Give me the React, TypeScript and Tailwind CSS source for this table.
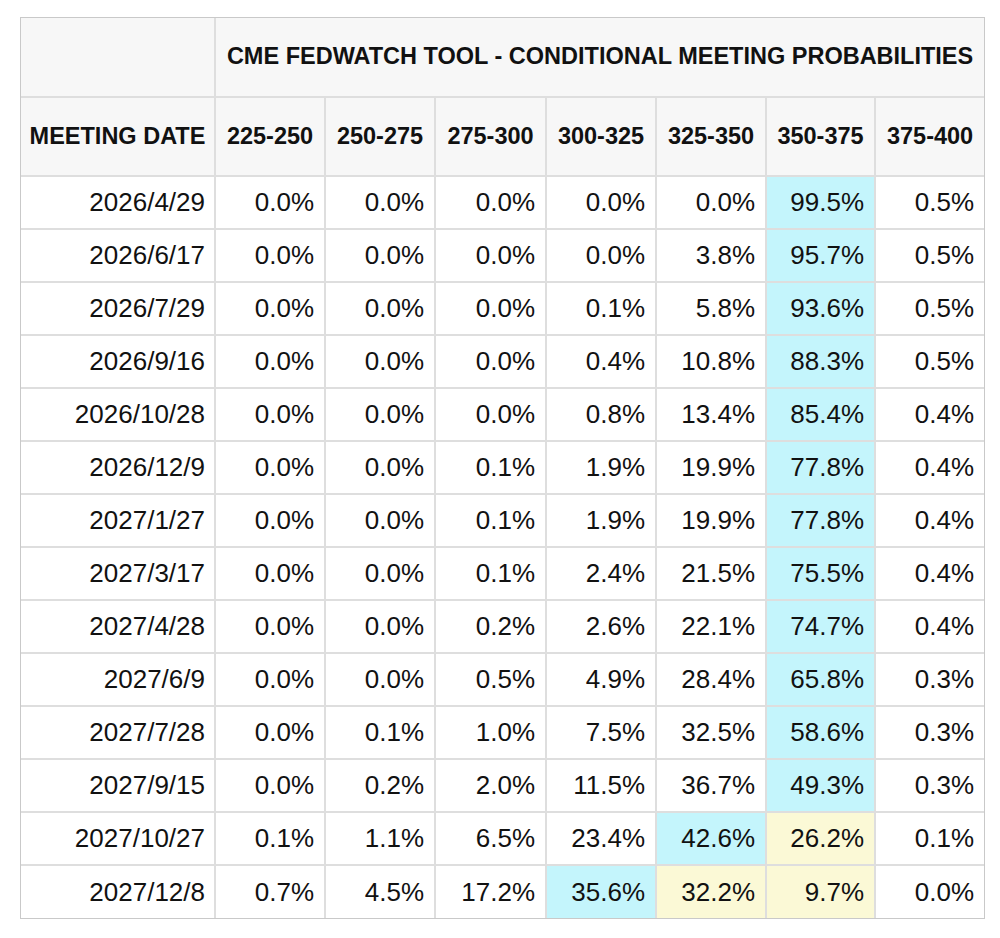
const columns = ['225-250', '250-275', '275-300', '300-325', '325-350', '350-375', '375-400']

// c = cyan highlight, y = yellow highlight
const rows: { date: string; values: string[]; marks: string }[] = [
  { date: '2026/4/29', values: ['0.0', '0.0', '0.0', '0.0', '0.0', '99.5', '0.5'], marks: '.....c.' },
  { date: '2026/6/17', values: ['0.0', '0.0', '0.0', '0.0', '3.8', '95.7', '0.5'], marks: '.....c.' },
  { date: '2026/7/29', values: ['0.0', '0.0', '0.0', '0.1', '5.8', '93.6', '0.5'], marks: '.....c.' },
  { date: '2026/9/16', values: ['0.0', '0.0', '0.0', '0.4', '10.8', '88.3', '0.5'], marks: '.....c.' },
  { date: '2026/10/28', values: ['0.0', '0.0', '0.0', '0.8', '13.4', '85.4', '0.4'], marks: '.....c.' },
  { date: '2026/12/9', values: ['0.0', '0.0', '0.1', '1.9', '19.9', '77.8', '0.4'], marks: '.....c.' },
  { date: '2027/1/27', values: ['0.0', '0.0', '0.1', '1.9', '19.9', '77.8', '0.4'], marks: '.....c.' },
  { date: '2027/3/17', values: ['0.0', '0.0', '0.1', '2.4', '21.5', '75.5', '0.4'], marks: '.....c.' },
  { date: '2027/4/28', values: ['0.0', '0.0', '0.2', '2.6', '22.1', '74.7', '0.4'], marks: '.....c.' },
  { date: '2027/6/9', values: ['0.0', '0.0', '0.5', '4.9', '28.4', '65.8', '0.3'], marks: '.....c.' },
  { date: '2027/7/28', values: ['0.0', '0.1', '1.0', '7.5', '32.5', '58.6', '0.3'], marks: '.....c.' },
  { date: '2027/9/15', values: ['0.0', '0.2', '2.0', '11.5', '36.7', '49.3', '0.3'], marks: '.....c.' },
  { date: '2027/10/27', values: ['0.1', '1.1', '6.5', '23.4', '42.6', '26.2', '0.1'], marks: '....cy.' },
  { date: '2027/12/8', values: ['0.7', '4.5', '17.2', '35.6', '32.2', '9.7', '0.0'], marks: '...cyy.' },
]

const cellBg = (mark: string) =>
  mark === 'c' ? 'bg-[#c4f5fc]' : mark === 'y' ? 'bg-[#fbf9d6]' : 'bg-white'

export default function App() {
  return (
    <div className="min-h-screen bg-white pt-[17px] pl-[20px] font-['Liberation_Sans',Arial,sans-serif] text-[#111]">
      <div className="w-[965px] border border-[#c9c9c9]">
        <table className="w-[963px] table-fixed border-collapse border-hidden">
          <colgroup>
            <col className="w-[194px]" />
            <col className="w-[110px]" />
            <col className="w-[110px]" />
            <col className="w-[111px]" />
            <col className="w-[110px]" />
            <col className="w-[110px]" />
            <col className="w-[109px]" />
            <col className="w-[109px]" />
          </colgroup>
          <thead>
            <tr className="h-[79px] bg-[#f7f7f7]">
              <th className="border-2 border-[#dedede]" />
              <th
                colSpan={7}
                className="border-2 border-[#dedede] text-center text-[23.5px] font-bold whitespace-nowrap"
              >
                CME FEDWATCH TOOL - CONDITIONAL MEETING PROBABILITIES
              </th>
            </tr>
            <tr className="h-[79px] bg-[#f7f7f7]">
              <th className="border-2 border-[#dedede] text-center text-[23.5px] font-bold whitespace-nowrap">
                MEETING DATE
              </th>
              {columns.map((c) => (
                <th
                  key={c}
                  className="border-2 border-[#dedede] text-center text-[23.5px] font-bold whitespace-nowrap"
                >
                  {c}
                </th>
              ))}
            </tr>
          </thead>
          <tbody>
            {rows.map((r) => (
              <tr key={r.date} className="h-[53px]">
                <td className="border-2 border-[#dedede] bg-white pr-[9px] text-right text-[26px] whitespace-nowrap">
                  {r.date}
                </td>
                {r.values.map((v, i) => (
                  <td
                    key={i}
                    className={`border-2 border-[#dedede] pr-[10px] text-right text-[26px] whitespace-nowrap ${cellBg(r.marks[i])}`}
                  >
                    {v}%
                  </td>
                ))}
              </tr>
            ))}
          </tbody>
        </table>
      </div>
    </div>
  )
}
